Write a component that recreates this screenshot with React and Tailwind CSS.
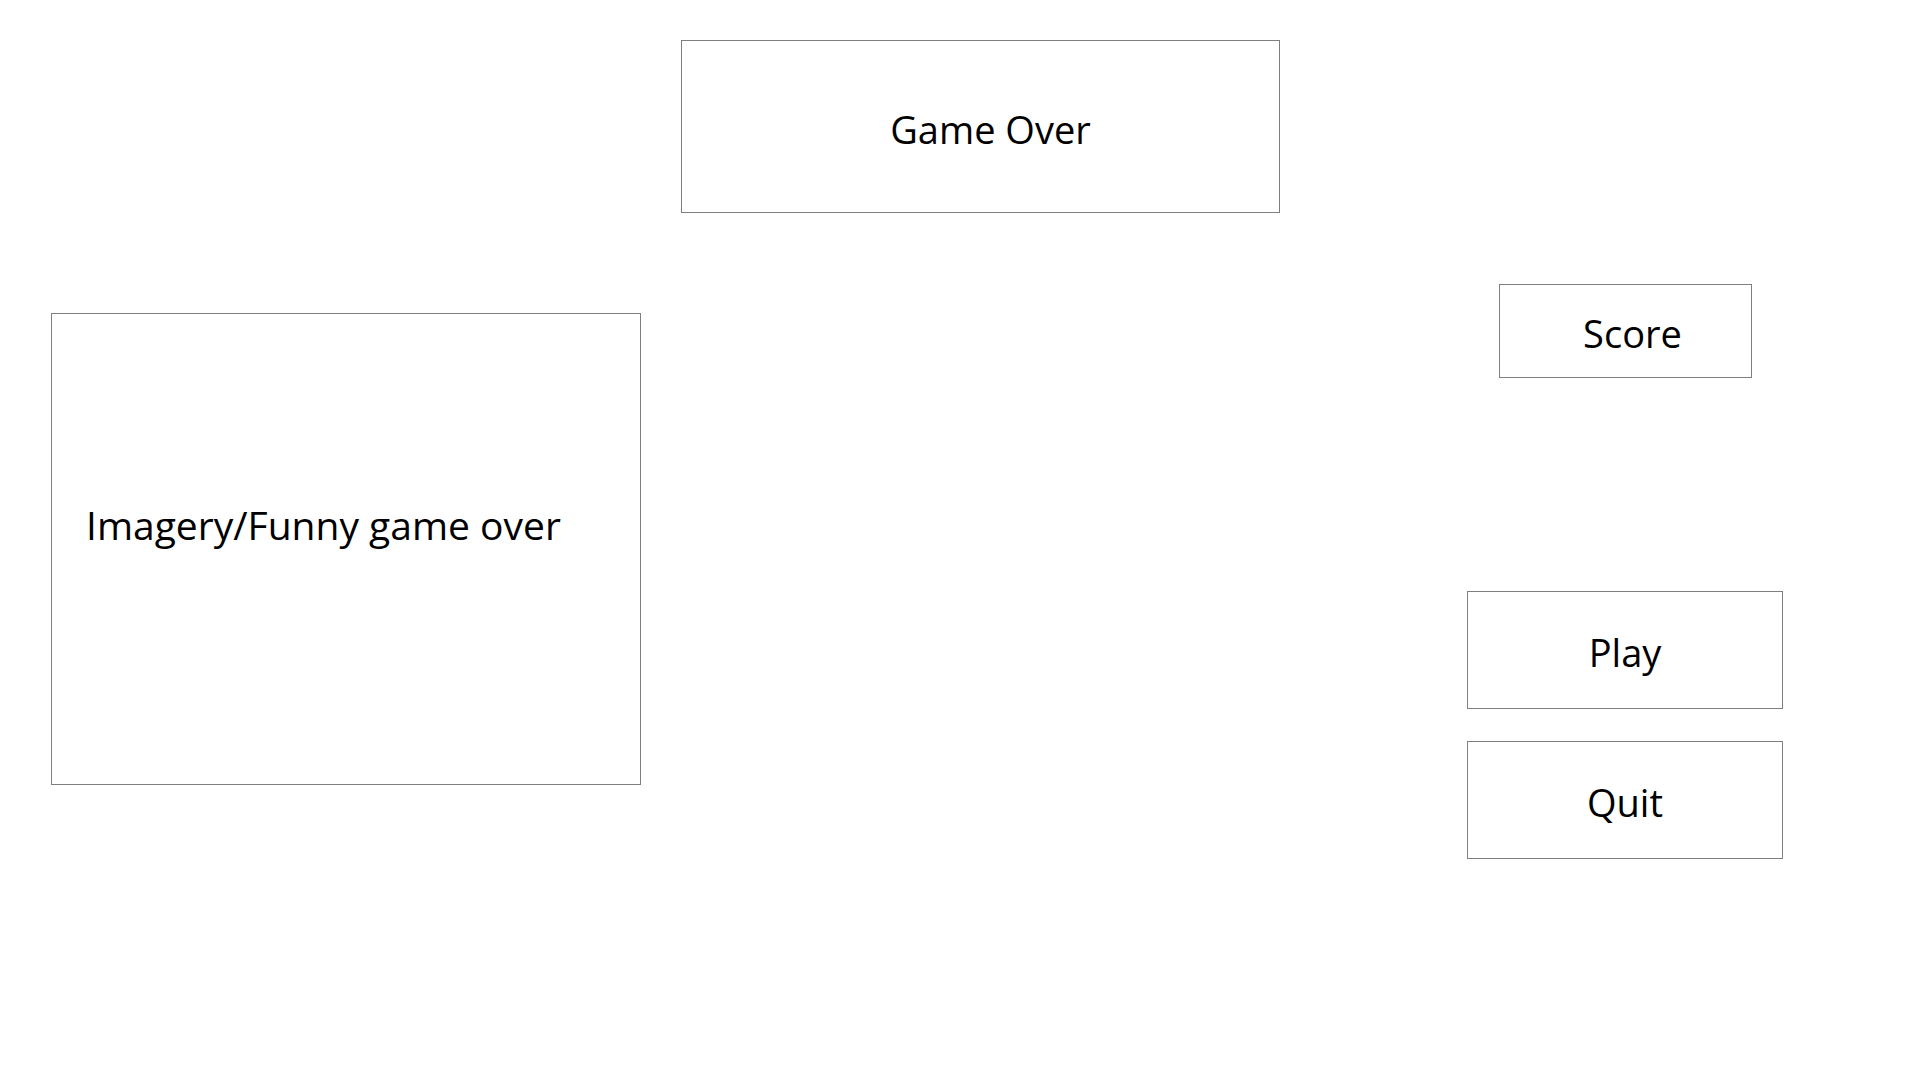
export default function App() {
  const font = { fontFamily: '"Open Sans", "Noto Sans", sans-serif' };

  return (
    <div
      className="w-[1920px] h-[1080px] bg-white text-black flex items-start overflow-hidden"
      style={font}
    >
      {/* Imagery column */}
      <div className="pl-[51px] pt-[313px]">
        <div className="w-[590px] h-[472px] border border-[#7f7f7f] flex flex-col justify-start pt-[187px] pl-[34px]">
          <span className="text-[39px] leading-[48px]">Imagery/Funny game over</span>
        </div>
      </div>

      {/* Title column */}
      <div className="pl-[40px] pt-[40px]">
        <div className="w-[599px] h-[173px] border border-[#7f7f7f] flex items-center justify-center pl-[20px] pt-[4px]">
          <span className="text-[38px] leading-[48px]">Game Over</span>
        </div>
      </div>

      {/* Score and actions column */}
      <div className="pl-[187px] pt-[284px] flex flex-col items-start">
        <div className="ml-[32px] w-[253px] h-[94px] border border-[#7f7f7f] flex items-center justify-center pl-[14px] pt-[4px]">
          <span className="text-[38px] leading-[48px]">Score</span>
        </div>
        <div className="mt-[213px] w-[316px] h-[118px] border border-[#7f7f7f] flex items-center justify-center pt-[4px]">
          <span className="text-[38px] leading-[48px]">Play</span>
        </div>
        <div className="mt-[32px] w-[316px] h-[118px] border border-[#7f7f7f] flex items-center justify-center pt-[4px]">
          <span className="text-[38px] leading-[48px]">Quit</span>
        </div>
      </div>
    </div>
  );
}
